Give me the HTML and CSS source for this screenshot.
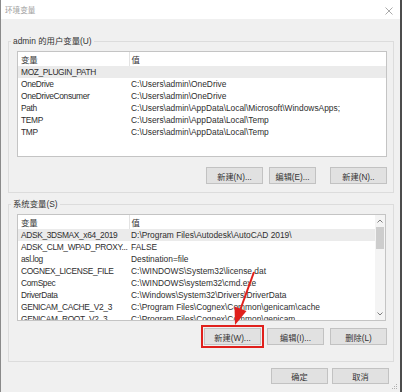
FILE: index.html
```html
<!DOCTYPE html>
<html lang="zh-CN">
<head>
    <meta charset="UTF-8">
    <title>环境变量</title>
    <link rel="stylesheet" href="styles.css">
</head>
<body>
    <div class="window">
        <div class="titlebar">
            <span class="title">环境变量</span>
            <svg class="close" width="8" height="8" viewBox="0 0 8 8"><path d="M0.5 0.5L7.5 7.5M7.5 0.5L0.5 7.5" stroke="#a0a0a0" stroke-width="0.9" fill="none"/></svg>
        </div>

        <div class="content">
            <fieldset class="group">
                <legend>admin 的用户变量(U)</legend>
                <div class="group-body user-body">
                    <div class="list user-list">
                        <table class="vars">
                            <thead>
                                <tr><th class="col-name">变量</th><th>值</th></tr>
                            </thead>
                            <tbody>
                                <tr class="selected"><td>MOZ_PLUGIN_PATH</td><td></td></tr>
                                <tr><td>OneDrive</td><td>C:\Users\admin\OneDrive</td></tr>
                                <tr><td>OneDriveConsumer</td><td>C:\Users\admin\OneDrive</td></tr>
                                <tr><td>Path</td><td>C:\Users\admin\AppData\Local\Microsoft\WindowsApps;</td></tr>
                                <tr><td>TEMP</td><td>C:\Users\admin\AppData\Local\Temp</td></tr>
                                <tr><td>TMP</td><td>C:\Users\admin\AppData\Local\Temp</td></tr>
                            </tbody>
                        </table>
                    </div>
                    <div class="btn-row user-btns">
                        <button class="btn">新建(N)...</button>
                        <button class="btn btn-narrow">编辑(E)...</button>
                        <button class="btn">新建(N)..</button>
                    </div>
                </div>
            </fieldset>

            <fieldset class="group system">
                <legend>系统变量(S)</legend>
                <div class="group-body system-body">
                    <div class="list system-list">
                        <div class="list-view">
                            <table class="vars">
                                <thead>
                                    <tr><th class="col-name">变量</th><th>值</th></tr>
                                </thead>
                                <tbody>
                                    <tr class="selected"><td>ADSK_3DSMAX_x64_2019</td><td>D:\Program Files\Autodesk\AutoCAD 2019\</td></tr>
                                    <tr><td>ADSK_CLM_WPAD_PROXY...</td><td>FALSE</td></tr>
                                    <tr><td>asl.log</td><td>Destination=file</td></tr>
                                    <tr><td>COGNEX_LICENSE_FILE</td><td>C:\WINDOWS\System32\license.dat</td></tr>
                                    <tr><td>ComSpec</td><td>C:\WINDOWS\system32\cmd.exe</td></tr>
                                    <tr><td>DriverData</td><td>C:\Windows\System32\Drivers\DriverData</td></tr>
                                    <tr><td>GENICAM_CACHE_V2_3</td><td>C:\Program Files\Cognex\Common\genicam\cache</td></tr>
                                    <tr><td>GENICAM_ROOT_V2_3</td><td>C:\Program Files\Cognex\Common\genicam</td></tr>
                                </tbody>
                            </table>
                        </div>
                        <div class="scrollbar">
                            <div class="scroll-arrow">
                                <svg width="6" height="4" viewBox="0 0 6 4"><path d="M0.5 3.5L3 1L5.5 3.5" stroke="#707070" stroke-width="0.9" fill="none"/></svg>
                            </div>
                            <div class="scroll-track"><div class="scroll-thumb"></div></div>
                            <div class="scroll-arrow">
                                <svg width="6" height="4" viewBox="0 0 6 4"><path d="M0.5 0.5L3 3L5.5 0.5" stroke="#707070" stroke-width="0.9" fill="none"/></svg>
                            </div>
                        </div>
                    </div>
                    <div class="btn-row">
                        <button class="btn btn-marked">新建(W)...</button>
                        <button class="btn">编辑(I)...</button>
                        <button class="btn">删除(L)</button>
                    </div>
                </div>
            </fieldset>

            <div class="dialog-btns">
                <button class="btn">确定</button>
                <button class="btn">取消</button>
            </div>
        </div>

        <svg class="grip" width="6" height="6" viewBox="0 0 6 6">
            <rect x="4" y="0" width="1" height="1" fill="#b0b0b0"/>
            <rect x="2" y="2" width="1" height="1" fill="#b0b0b0"/>
            <rect x="4" y="2" width="1" height="1" fill="#b0b0b0"/>
            <rect x="0" y="4" width="1" height="1" fill="#b0b0b0"/>
            <rect x="2" y="4" width="1" height="1" fill="#b0b0b0"/>
            <rect x="4" y="4" width="1" height="1" fill="#b0b0b0"/>
        </svg>
    </div>

    <!-- red annotation arrow -->
    <svg class="arrow" width="402" height="392" viewBox="0 0 402 392">
        <line x1="254" y1="272" x2="240.5" y2="309" stroke="#e0201c" stroke-width="2"/>
        <polygon points="235,325 234.5,306.5 246.5,311" fill="#e0201c"/>
    </svg>
</body>
</html>
```

FILE: styles.css
```css
* {
    margin: 0;
    padding: 0;
    box-sizing: border-box;
}

body {
    position: relative;
    width: 402px;
    height: 392px;
    font-family: "Liberation Sans", "Noto Sans CJK SC", sans-serif;
    font-size: 8.4px;
    color: #2e2e2e;
    background: #f0f0f0;
}

/* Dialog frame */
.window {
    position: relative;
    width: 402px;
    height: 392px;
    background: #f0f0f0;
    border-left: 1px solid #8a8a8a;
    border-right: 2px solid #4c4c4c;
}

.titlebar {
    display: flex;
    align-items: center;
    justify-content: space-between;
    height: 19px;
    padding: 0 7px 0 4px;
    background: #fff;
}

.title {
    font-size: 7.6px;
    color: #a0a0a0;
}

.close {
    display: block;
    margin-top: 3px;
}

.content {
    padding-left: 7px;
}

/* Group boxes */
.group {
    width: 386px;
    margin-top: 16px;
    padding: 0;
    border: 1px solid #dcdcdc;
    min-inline-size: 0;
}

.group.system {
    margin-top: 5px;
}

.group legend {
    margin-left: 2px;
    padding: 0 2px;
    line-height: 12px;
    color: #333;
}

.group-body {
    padding: 4px 6px 8px 8px;
}

.system-body {
    padding-bottom: 16px;
}

/* List views */
.list {
    background: #fff;
    border: 1px solid #c4c4c4;
    overflow: hidden;
}

.user-list {
    width: 370px;
    height: 106px;
}

.system-list {
    display: flex;
    width: 369px;
    height: 107px;
}

.list-view {
    flex: 1;
    overflow: hidden;
}

.vars {
    width: 100%;
    border-collapse: collapse;
    table-layout: fixed;
}

.vars th {
    height: 14px;
    padding-left: 2px;
    text-align: left;
    font-weight: normal;
    color: #333;
}

.vars th.col-name {
    width: 111px;
    padding-left: 3px;
    border-right: 1px solid #e3e3e3;
}

.vars td {
    height: 12px;
    line-height: 12px;
    padding-left: 2px;
    white-space: nowrap;
    overflow: hidden;
}

.vars td:first-child {
    padding-left: 3px;
    padding-right: 2px;
    letter-spacing: -0.35px;
    text-overflow: clip;
}

.vars tr.selected td {
    background: #ebebeb;
}

/* Scrollbar */
.scrollbar {
    display: flex;
    flex-direction: column;
    width: 10px;
    background: #f4f4f4;
}

.scroll-arrow {
    display: flex;
    align-items: center;
    justify-content: center;
    height: 12px;
}

.scroll-track {
    flex: 1;
    padding: 0 1px;
}

.scroll-thumb {
    height: 22px;
    background: #cdcdcd;
}

/* Buttons */
.btn-row {
    display: flex;
    justify-content: flex-end;
    gap: 6px;
    margin-top: 7px;
    width: 370px;
}

.user-btns {
    margin-top: 10px;
}

.btn {
    width: 57px;
    height: 17px;
    font-family: inherit;
    font-size: 8.2px;
    color: #333;
    background: #e1e1e1;
    border: 1px solid #c2c2c2;
}

.btn-narrow {
    width: 47px;
    margin-right: 8px;
}

.btn-marked {
    outline: 2px solid #e0201c;
    outline-offset: 1px;
}

.dialog-btns {
    display: flex;
    justify-content: flex-end;
    gap: 4px;
    margin-top: 6px;
    padding-right: 11px;
}

.dialog-btns .btn {
    height: 16px;
}

.grip {
    position: absolute;
    right: 2px;
    bottom: 2px;
}

.arrow {
    position: absolute;
    left: 0;
    top: 0;
    pointer-events: none;
}
```
